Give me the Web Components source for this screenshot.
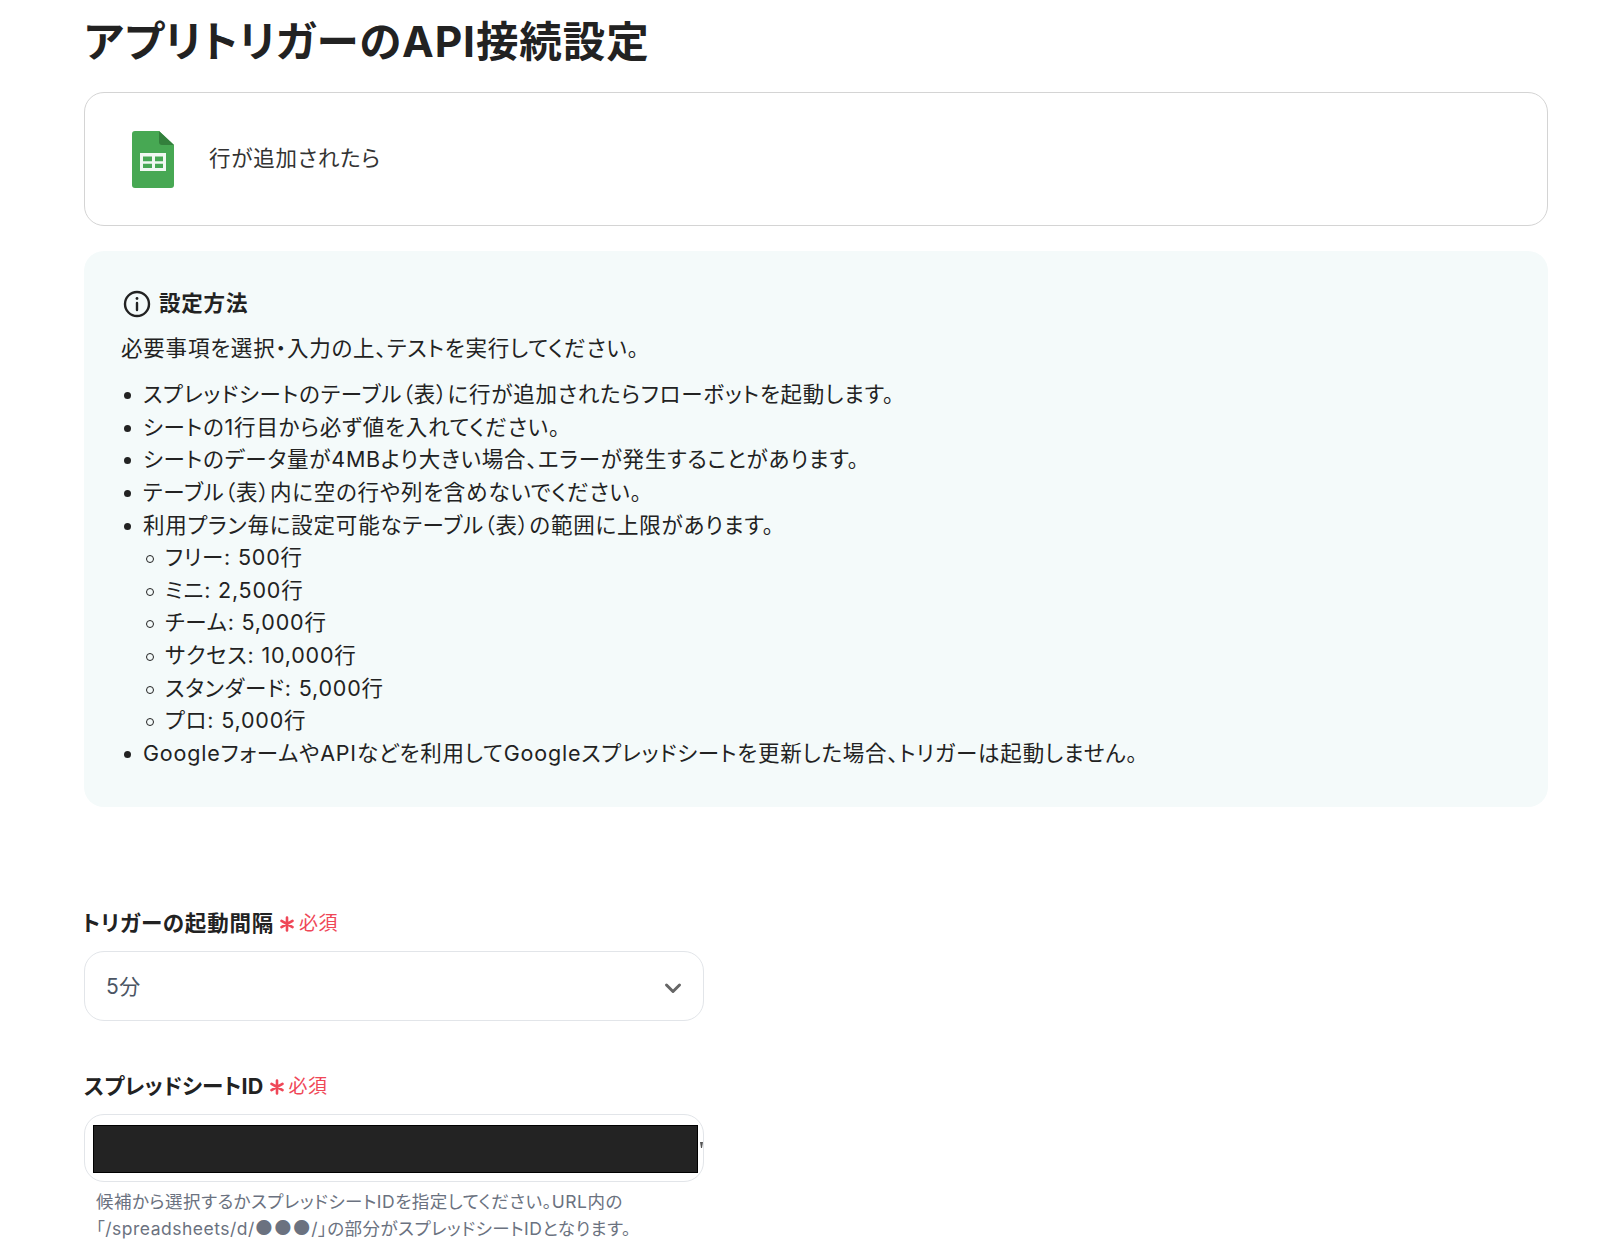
<!DOCTYPE html>
<html lang="ja">
<head>
<meta charset="utf-8">
<title>アプリトリガーのAPI接続設定</title>
<style>
  html, body { margin: 0; background: #fff; }
  body {
    font-family: Inter, "Noto Sans CJK JP", sans-serif;
    font-feature-settings: "palt";
    color: #222;
    height: 1248px;
    overflow: hidden;
  }
</style>
</head>
<body>
<settings-page>
  <page-title>アプリトリガーのAPI接続設定</page-title>
  <trigger-card>行が追加されたら</trigger-card>
  <info-panel heading="設定方法">
    <p slot="lead">必要事項を選択・入力の上、テストを実行してください。</p>
    <bullet-item>スプレッドシートのテーブル（表）に行が追加されたらフローボットを起動します。</bullet-item>
    <bullet-item>シートの1行目から必ず値を入れてください。</bullet-item>
    <bullet-item>シートのデータ量が4MBより大きい場合、エラーが発生することがあります。</bullet-item>
    <bullet-item>テーブル（表）内に空の行や列を含めないでください。</bullet-item>
    <bullet-item>利用プラン毎に設定可能なテーブル（表）の範囲に上限があります。</bullet-item>
    <bullet-item sub>フリー: 500行</bullet-item>
    <bullet-item sub>ミニ: 2,500行</bullet-item>
    <bullet-item sub>チーム: 5,000行</bullet-item>
    <bullet-item sub>サクセス: 10,000行</bullet-item>
    <bullet-item sub>スタンダード: 5,000行</bullet-item>
    <bullet-item sub>プロ: 5,000行</bullet-item>
    <bullet-item>GoogleフォームやAPIなどを利用してGoogleスプレッドシートを更新した場合、トリガーは起動しません。</bullet-item>
  </info-panel>
  <form-field label="トリガーの起動間隔" style="--label-shift:-2px;margin-top:98px">
    <select-box>5分</select-box>
  </form-field>
  <form-field label="スプレッドシートID" style="--label-ls:0.2px;margin-top:47px">
    <masked-input></masked-input>
    <p slot="help">候補から選択するかスプレッドシートIDを指定してください。URL内の<br>「/spreadsheets/d/<span style="font-size:20px;line-height:0">●●●</span>/」の部分がスプレッドシートIDとなります。</p>
  </form-field>
</settings-page>

<script>
function makeEl(name, html) {
  customElements.define(name, class extends HTMLElement {
    constructor() {
      super();
      this.attachShadow({ mode: 'open' });
    }
    connectedCallback() {
      this.shadowRoot.innerHTML = typeof html === 'function' ? html(this) : html;
    }
  });
}

makeEl('settings-page', `
  <style>:host { display: block; padding: 0 52px 0 84px; }</style>
  <slot></slot>
`);

makeEl('page-title', `
  <style>
    :host {
      display: block;
      height: 92px;
      font-size: 42.5px;
      font-weight: 700;
      line-height: 84px;
      letter-spacing: 0.9px;
      color: #222;
    }
  </style>
  <slot></slot>
`);

makeEl('trigger-card', `
  <style>
    :host {
      display: flex;
      align-items: center;
      box-sizing: border-box;
      height: 134px;
      padding-left: 47px;
      gap: 35px;
      border: 1px solid #d4d4d4;
      border-radius: 20px;
      font-size: 21.5px;
      letter-spacing: 0.8px;
      color: #333;
    }
    span { position: relative; top: -3px; }
    svg { display: block; width: 42px; height: 57px; flex: none; }
  </style>
  <svg viewBox="0 0 42 57">
    <path d="M3 0H27L42 14V54a3 3 0 0 1-3 3H3a3 3 0 0 1-3-3V3a3 3 0 0 1 3-3Z" fill="#47A853"/>
    <path d="M27 0L42 14H30a3 3 0 0 1-3-3Z" fill="#33803C"/>
    <path d="M8 22H34V40H8Z M11 25.5V30.3H20V25.5Z M23 25.5V30.3H31V25.5Z M11 32.8V37H20V32.8Z M23 32.8V37H31V32.8Z" fill="#F1F8F1" fill-rule="evenodd"/>
  </svg>
  <span><slot></slot></span>
`);

makeEl('info-panel', el => `
  <style>
    :host {
      display: block;
      box-sizing: border-box;
      height: 556px;
      margin-top: 25px;
      padding: 36px 38px 0 37px;
      border-radius: 20px;
      background: #f4fafa;
      font-size: 21.5px;
      line-height: 32.6px;
      letter-spacing: 0.8px;
      color: #222;
    }
    .head {
      display: flex;
      align-items: center;
      gap: 8px;
      margin-left: 2px;
      font-weight: 700;
    }
    svg { width: 28px; height: 28px; flex: none; margin-top: 2px; }
    ::slotted(p) { margin: 12px 0 14px; }
  </style>
  <div class="head">
    <svg viewBox="0 0 28 28" fill="none" stroke="#222" stroke-width="2.4" stroke-linecap="round">
      <circle cx="14" cy="14" r="12"/>
      <path d="M14 13V20"/>
      <path d="M14 8.4V8.6" stroke-width="2.8"/>
    </svg>
    <span>${el.getAttribute('heading')}</span>
  </div>
  <slot name="lead"></slot>
  <slot></slot>
`);

makeEl('bullet-item', el => `
  <style>
    :host {
      display: block;
      position: relative;
      padding-left: ${el.hasAttribute('sub') ? 44 : 22}px;
    }
    i {
      position: absolute;
      top: 14px;
      box-sizing: border-box;
      ${el.hasAttribute('sub')
        ? 'left: 25px; width: 8px; height: 8px; border: 1px solid #222;'
        : 'left: 3px; width: 7px; height: 7px; background: #222;'}
      border-radius: 50%;
    }
  </style>
  <i></i><slot></slot>
`);

makeEl('form-field', el => `
  <style>
    :host { display: block; }
    .label {
      display: flex;
      align-items: center;
      gap: 6px;
      height: 32px;
      margin-left: var(--label-shift, 0);
      margin-bottom: 14px;
      font-size: 21.5px;
      font-weight: 700;
      letter-spacing: var(--label-ls, 0.8px);
      color: #222;
    }
    .req {
      display: inline-flex;
      align-items: center;
      gap: 5px;
      font-size: 19px;
      font-weight: 400;
      letter-spacing: 0.5px;
      color: #ef4757;
    }
    svg { width: 14px; height: 16px; margin-top: 5px; }
    ::slotted(p) {
      width: 640px;
      margin: 7px 0 0 12px;
      font-size: 17.5px;
      line-height: 26.5px;
      letter-spacing: 0.5px;
      color: #6b7280;
    }
  </style>
  <div class="label">
    <span>${el.getAttribute('label')}</span>
    <span class="req">
      <svg viewBox="0 0 14 16" stroke="#ef4757" stroke-width="2.6" stroke-linecap="round">
        <path d="M7 1.5V14.5M1.5 4.8L12.5 11.2M12.5 4.8L1.5 11.2"/>
      </svg>
      必須
    </span>
  </div>
  <slot></slot>
  <slot name="help"></slot>
`);

makeEl('select-box', `
  <style>
    :host {
      display: flex;
      align-items: center;
      justify-content: space-between;
      box-sizing: border-box;
      width: 620px;
      height: 70px;
      padding: 0 20px 0 21px;
      border: 1.5px solid #e2e5e9;
      border-radius: 20px;
      font-size: 21px;
      letter-spacing: 0.5px;
      color: #4b5563;
    }
    span { position: relative; top: -1px; }
    svg { width: 20px; height: 20px; display: block; margin-top: 3px; }
  </style>
  <span><slot></slot></span>
  <svg viewBox="0 0 20 20" fill="none" stroke="#666" stroke-width="3" stroke-linecap="round" stroke-linejoin="round">
    <path d="M3.5 7L10 13.5L16.5 7"/>
  </svg>
`);

makeEl('masked-input', `
  <style>
    :host {
      display: flex;
      align-items: flex-start;
      box-sizing: border-box;
      width: 620px;
      height: 68px;
      padding: 10px 0 10px 7.5px;
      border: 1.5px solid #e2e5e9;
      border-radius: 20px;
    }
    div { width: 605.5px; height: 48px; background: #232323; border: 1px solid #000; box-sizing: border-box; flex: none; }
    svg { width: 3px; height: 6px; margin: 17px 0 0 2px; flex: none; }
  </style>
  <div></div>
  <svg viewBox="0 0 3 6"><path d="M0 0H3L2 6H1Z" fill="#555"/></svg>
`);
</script>
</body>
</html>
